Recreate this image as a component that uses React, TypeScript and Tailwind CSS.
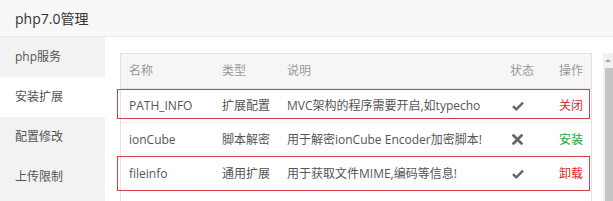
import React from "react";

const font = { fontFamily: '"Open Sans", "Noto Sans CJK SC", sans-serif' };

type Row = { name: string; type: string; desc: string; ok: boolean; op: string; opColor: string; box?: string };

const rows: Row[] = [
  { name: "PATH_INFO", type: "扩展配置", desc: "MVC架构的程序需要开启,如typecho", ok: true, op: "关闭", opColor: "text-[#e0282d]", box: "top-0 h-[30px]" },
  { name: "ionCube", type: "脚本解密", desc: "用于解密ionCube Encoder加密脚本!", ok: false, op: "安装", opColor: "text-[#20a53a]" },
  { name: "fileinfo", type: "通用扩展", desc: "用于获取文件MIME,编码等信息!", ok: true, op: "卸载", opColor: "text-[#e0282d]", box: "top-[-1px] h-[35px]" },
];

function Check() {
  return (
    <svg width="12" height="10" viewBox="0 0 12 10">
      <path d="M1 5.2 L4.3 8.4 L11 1.6" fill="none" stroke="#666" strokeWidth="2.4" strokeLinejoin="round" />
    </svg>
  );
}

function Cross() {
  return (
    <svg width="11" height="11" viewBox="0 0 11 11">
      <path d="M1.5 1.5 L9.5 9.5 M9.5 1.5 L1.5 9.5" stroke="#666" strokeWidth="2.8" strokeLinecap="round" />
    </svg>
  );
}

export default function App() {
  return (
    <div className="w-[613px] h-[201px] overflow-hidden bg-white" style={font}>
      <div className="h-[37px] bg-[#f8f8f8] border-b border-[#ececec] flex items-center pl-[15px] text-[14px] text-[#333]">
        php7.0管理
      </div>
      <div className="flex h-[164px]">
        <div className="w-[105px] shrink-0 bg-[#f2f2f2] flex flex-col text-[12px] text-[#555]">
          <div className="h-[40px] flex items-center pl-[15px]">php服务</div>
          <div className="h-[40px] flex items-center pl-[15px] bg-white">安装扩展</div>
          <div className="h-[40px] flex items-center pl-[15px]">配置修改</div>
          <div className="h-[40px] flex items-center pl-[15px]">上传限制</div>
        </div>
        <div className="flex-1 flex items-start pt-[16px] pl-[15px]">
          <div className="w-[472px] shrink-0 border border-[#e2e2e2] text-[12px]">
            <div className="h-[35px] bg-[#f6f6f6] flex items-center text-[#999] border-b border-[#e6e6e6] whitespace-nowrap">
              <div className="w-[101px] shrink-0 pl-[8px]">名称</div>
              <div className="w-[65px] shrink-0">类型</div>
              <div className="w-[223px] shrink-0">说明</div>
              <div className="w-[47px] shrink-0">状态</div>
              <div className="flex-1 text-right pr-[8px]">操作</div>
            </div>
            {rows.map((r) => (
              <div key={r.name} className="relative h-[34px] flex items-center text-[#555] border-b border-[#efefef] whitespace-nowrap">
                <div className="w-[101px] shrink-0 pl-[8px]">{r.name}</div>
                <div className="w-[65px] shrink-0">{r.type}</div>
                <div className="w-[223px] shrink-0">{r.desc}</div>
                <div className="w-[47px] shrink-0 flex pl-[2px]">{r.ok ? <Check /> : <Cross />}</div>
                <div className={`flex-1 text-right pr-[8px] ${r.opColor}`}>{r.op}</div>
                {r.box && (
                  <span className={`absolute left-[-4px] right-[1px] border border-[#d2424a] ${r.box}`} />
                )}
              </div>
            ))}
            <div className="h-[34px]" />
          </div>
          <div className="ml-[11px] w-[10px] h-[150px] bg-[#f1f1f1] flex flex-col items-center">
            <div className="h-[15px] w-full flex items-center justify-center">
              <div className="w-0 h-0 border-l-[3px] border-r-[3px] border-b-[3px] border-l-transparent border-r-transparent border-b-[#a3a3a3]" />
            </div>
            <div className="flex-1 w-[8px] ml-[2px] bg-[#c4c4c4]" />
          </div>
        </div>
      </div>
    </div>
  );
}
